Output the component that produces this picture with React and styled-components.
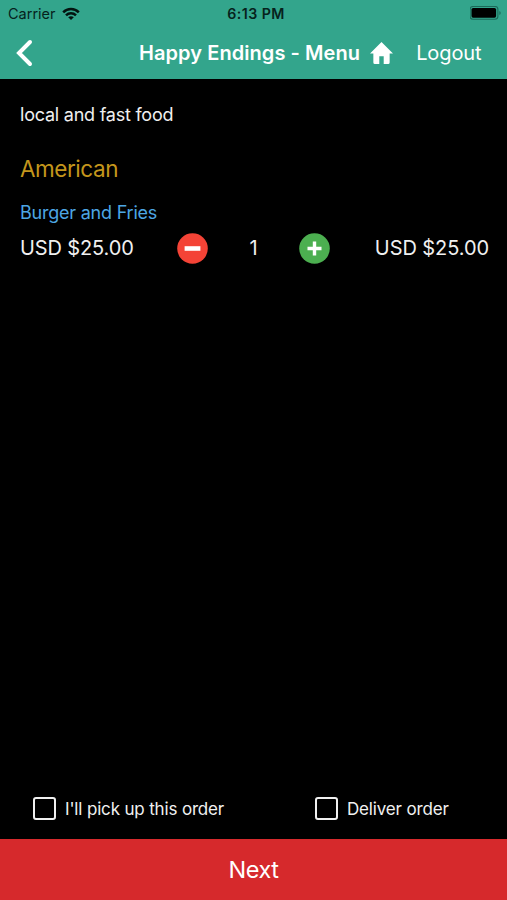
import { useState } from 'react'
import styled, { createGlobalStyle } from 'styled-components'

const color = {
  GREEN: '#33a58c',
  RED: '#d6292c',
  WHITE: '#fff',
  TEXT: '#f0f0f0',
  GOLD: '#c4961c',
  BLUE: '#4da6e4',
  MINUS: '#f44336',
  PLUS: '#4caf50',
}

const GlobalStyle = createGlobalStyle`
  * {
    box-sizing: border-box;
  }

  body {
    margin: 0;
    background: #000;
    font-family: Inter, 'Liberation Sans', sans-serif;
  }

  button {
    font-family: inherit;
    border: 0;
    padding: 0;
    background: none;
    cursor: pointer;
  }

  svg {
    display: block;
    flex: none;
  }
`

const Screen = styled.div`
  height: 100vh;
  display: flex;
  flex-direction: column;
  background: #000;
`

const Header = styled.header`
  height: 79px;
  background: ${color.GREEN};
`

const StatusBar = styled.div`
  height: 27px;
  padding: 0 3px 0 8px;
  display: grid;
  grid-template-columns: 1fr auto 1fr;
  align-items: center;
  color: #06221c;
`

const Carrier = styled.div`
  display: flex;
  align-items: center;
  gap: 6px;
`

const Text = styled.span`
  font-size: ${props => props.$size}px;
  font-weight: ${props => props.$weight || 400};
  letter-spacing: ${props => props.$spacing || 0}px;
  line-height: ${props => props.$line || 24}px;
  color: ${props => props.$color || 'inherit'};
  white-space: nowrap;
`

const Battery = styled.div`
  justify-self: end;
`

const NavBar = styled.nav`
  height: 52px;
  padding: 0 24px 0 15px;
  display: flex;
  align-items: center;
  color: ${color.WHITE};
`

const BackButton = styled.button`
  width: 124px;
`

const HomeButton = styled.button`
  margin: 0 23px 0 10px;
`

const Content = styled.main`
  flex: 1;
  padding: 24px 18px 0 20px;
  display: flex;
  flex-direction: column;
  align-items: flex-start;
`

const Section = styled.section`
  width: 100%;
  margin-top: 28px;
  display: flex;
  flex-direction: column;
`

const Item = styled.div`
  margin-top: 18px;
  display: flex;
  flex-direction: column;
`

const ItemRow = styled.div`
  height: 32px;
  margin-top: 7px;
  display: grid;
  grid-template-columns: 157px 31px 91px 31px 1fr;
  align-items: center;
`

const Centered = styled.div`
  text-align: center;
`

const Total = styled.div`
  text-align: right;
`

const Options = styled.div`
  height: 61px;
  padding: 0 33px;
  display: grid;
  grid-template-columns: 282px 1fr;
  align-items: center;
`

const Option = styled.label`
  display: flex;
  align-items: center;
  gap: 9px;
`

const Checkbox = styled.input`
  appearance: none;
  width: 23px;
  height: 23px;
  margin: 0;
  border: 2px solid ${color.TEXT};
  border-radius: 3px;
  background: ${props => (props.checked ? color.PLUS : 'transparent')};
`

const NextButton = styled.button`
  height: 61px;
  background: ${color.RED};
  color: ${color.WHITE};
`

const WifiIcon = () => (
  <svg width="18" height="14" viewBox="0 0 18 14" fill="none" stroke="#031410" strokeWidth="2.5">
    <path d="M1.2 5.3C5.5 0.9 12.5 0.9 16.8 5.3" />
    <path d="M4 8.4c2.8-2.8 7.2-2.8 10 0" />
    <path d="M9 13L6.2 10.3c1.600-1.500 4-1.500 5.600 0z" fill="#031410" stroke="none" />
  </svg>
)

const BatteryIcon = () => (
  <svg width="34" height="15" viewBox="0 0 34 15">
    <rect x="0.1" y="0.500" width="27.800" height="12.800" rx="3" fill="none" stroke="#1b6a59" strokeWidth="1.100" />
    <rect x="1.500" y="2" width="24.600" height="9.700" rx="1.600" fill="#000" />
    <path d="M29.400 5c1.700.6 1.700 3.400 0 4z" fill="#1b6a59" />
  </svg>
)

const BackIcon = () => (
  <svg width="20" height="28" viewBox="0 0 20 28" fill="none" stroke="#fff" strokeWidth="4">
    <path d="M15 3L4 14l11 11" strokeLinecap="round" strokeLinejoin="miter" />
  </svg>
)

const HomeIcon = () => (
  <svg width="23" height="22" viewBox="0 0 24 22" preserveAspectRatio="none" fill="#fff">
    <path d="M12 0L0 11.400h3.500V20.400q0 1.600 1.600 1.600H9.700V14.300h4.600V22h4.600q1.600 0 1.600-1.600V11.400H24z" />
  </svg>
)

const RoundIcon = ({ plus }) => (
  <svg width="31" height="31" viewBox="0 0 31 31">
    <circle cx="15.500" cy="15.500" r="15.300" fill={plus ? color.PLUS : color.MINUS} />
    {plus ? (
      <path d="M8.500 15.500h14M15.500 8.500v14" stroke="#fff" strokeWidth="3.400" />
    ) : (
      <path d="M7.600 15.500h15.800" stroke="#fff" strokeWidth="4.600" />
    )}
  </svg>
)

const PRICE = 25

const App = () => {
  const [quantity, setQuantity] = useState(1)
  const [method, setMethod] = useState(null)

  return (
    <Screen>
      <GlobalStyle />
      <Header>
        <StatusBar>
          <Carrier>
            <Text $size={14.5}>Carrier</Text>
            <WifiIcon />
          </Carrier>
          <Text $size={14.2} $weight={600} $spacing={0.45}>6:13 PM</Text>
          <Battery>
            <BatteryIcon />
          </Battery>
        </StatusBar>
        <NavBar>
          <BackButton aria-label="Back">
            <BackIcon />
          </BackButton>
          <Text $size={20} $weight={600} $spacing={0.07}>Happy Endings - Menu</Text>
          <HomeButton aria-label="Home">
            <HomeIcon />
          </HomeButton>
          <Text $size={20} $spacing={-0.1}>Logout</Text>
        </NavBar>
      </Header>

      <Content>
        <Text $size={18} $spacing={-0.23} $color={color.TEXT}>local and fast food</Text>
        <Section>
          <Text $size={22.5} $line={28} $spacing={-0.45} $color={color.GOLD}>American</Text>
          <Item>
            <Text $size={18} $spacing={-0.22} $color={color.BLUE}>Burger and Fries</Text>
            <ItemRow>
              <Text $size={20} $spacing={-0.12} $color={color.TEXT}>USD $25.00</Text>
              <button aria-label="Remove one" onClick={() => setQuantity(prev => Math.max(prev - 1, 0))}>
                <RoundIcon />
              </button>
              <Centered>
                <Text $size={20} $color={color.TEXT}>{quantity}</Text>
              </Centered>
              <button aria-label="Add one" onClick={() => setQuantity(prev => prev + 1)}>
                <RoundIcon plus />
              </button>
              <Total>
                <Text $size={20} $spacing={-0.08} $color={color.TEXT}>USD ${(quantity * PRICE).toFixed(2)}</Text>
              </Total>
            </ItemRow>
          </Item>
        </Section>
      </Content>

      <Options>
        <Option>
          <Checkbox type="checkbox" checked={method === 'pickup'} onChange={() => setMethod('pickup')} />
          <Text $size={17} $spacing={-0.16} $color={color.TEXT}>I'll pick up this order</Text>
        </Option>
        <Option>
          <Checkbox type="checkbox" checked={method === 'deliver'} onChange={() => setMethod('deliver')} />
          <Text $size={17} $spacing={-0.16} $color={color.TEXT}>Deliver order</Text>
        </Option>
      </Options>
      <NextButton>
        <Text $size={23.5} $spacing={-0.5}>Next</Text>
      </NextButton>
    </Screen>
  )
}

export default App
